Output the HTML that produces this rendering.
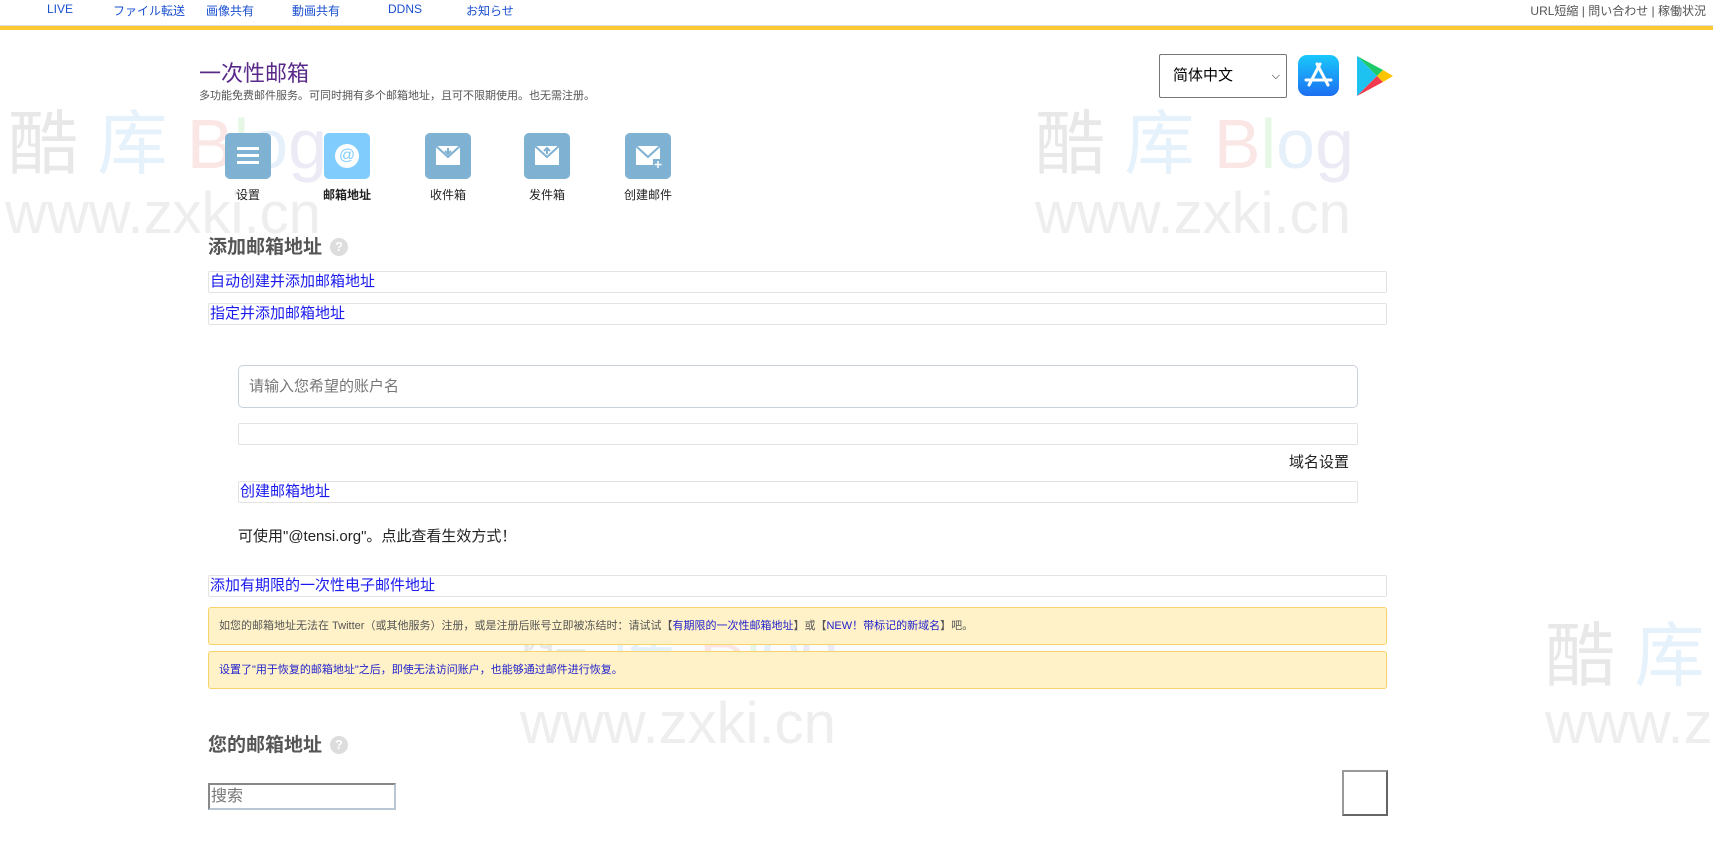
<!DOCTYPE html>
<html><head><meta charset="utf-8">
<style>
*{box-sizing:border-box;margin:0;padding:0}
body{width:1713px;height:849px;overflow:hidden;background:#fff;font-family:"Liberation Sans","Noto Sans CJK SC",sans-serif;position:relative;color:#222}
.a{position:absolute;white-space:nowrap}
.nav{font-size:12px;color:#1a4fd0;top:2px}
.bar{position:absolute;left:0;top:25px;width:1713px;height:5px;background:#fcc934;border-top:1px solid #ddd}
.wm{position:absolute;color:#eee;font-size:70px;white-space:nowrap}
.ic{position:absolute;top:133px;width:46px;height:46px;border-radius:5px;background:#7fb1d3}
.lb{position:absolute;top:186px;font-size:12px;width:100px;text-align:center;color:#222}
.h2{font-size:19px;font-weight:bold;color:#555}
.q{display:inline-block;width:18px;height:18px;border-radius:50%;background:#ddd;color:#fff;font-size:13px;text-align:center;line-height:18px;vertical-align:2px;margin-left:8px}
.box{position:absolute;border:1px solid #e3e3e3;border-radius:2px;color:#1a1aee;font-size:15px;line-height:19px;padding-left:1px}
.al{position:absolute;left:208px;width:1179px;background:#fff2c8;border:1px solid #f7d36a;border-radius:3px;font-size:11px;padding:0 10px;line-height:36px;color:#555}
.al b{font-weight:normal;color:#2222cc}
</style></head><body>
<div class="wm" style="left:8px;top:88px;color:#e8e8e8">酷 <span style="color:#e5f1fb">库</span> <span style="color:#fbe6e6">B</span><span style="color:#e6f7e6">l</span><span style="color:#e6f0fb">o</span><span style="color:#ecebf5">g</span></div>
<div class="wm" style="left:5px;top:180px;font-size:58px">www.zxki.cn</div>
<div class="wm" style="left:1035px;top:88px;color:#e8e8e8">酷 <span style="color:#e5f1fb">库</span> <span style="color:#fbe6e6">B</span><span style="color:#e6f7e6">l</span><span style="color:#e6f0fb">o</span><span style="color:#ecebf5">g</span></div>
<div class="wm" style="left:1035px;top:180px;font-size:58px">www.zxki.cn</div>
<div class="wm" style="left:520px;top:590px;color:#e8e8e8">酷 <span style="color:#e5f1fb">库</span> <span style="color:#fbe6e6">B</span><span style="color:#e6f7e6">l</span><span style="color:#e6f0fb">o</span><span style="color:#ecebf5">g</span></div>
<div class="wm" style="left:520px;top:690px;font-size:58px">www.zxki.cn</div>
<div class="wm" style="left:1545px;top:600px;color:#e8e8e8">酷 <span style="color:#e5f1fb">库</span></div>
<div class="wm" style="left:1545px;top:690px;font-size:58px">www.z</div>

<div class="a nav" style="left:47px">LIVE</div>
<div class="a nav" style="left:113px">ファイル転送</div>
<div class="a nav" style="left:206px">画像共有</div>
<div class="a nav" style="left:292px">動画共有</div>
<div class="a nav" style="left:388px">DDNS</div>
<div class="a nav" style="left:466px">お知らせ</div>
<div class="a" style="right:7px;top:2px;font-size:12px;color:#555">URL短縮 | 問い合わせ | 稼働状況</div>
<div class="bar"></div>

<div class="a" style="left:199px;top:56px;font-size:22px;color:#5a2a8a">一次性邮箱</div>
<div class="a" style="left:199px;top:87px;font-size:11px;color:#555">多功能免费邮件服务。可同时拥有多个邮箱地址，且可不限期使用。也无需注册。</div>

<div class="a" style="left:1159px;top:54px;width:128px;height:44px;border:1px solid #777;border-radius:2px;font-size:15px;line-height:42px;padding-left:13px;color:#000">简体中文<span style="position:absolute;right:6px;font-size:11px">&#9013;</span></div>
<svg class="a" style="left:1298px;top:55px" width="41" height="41" viewBox="0 0 41 41"><defs><linearGradient id="g" x1="0" y1="0" x2="0" y2="1"><stop offset="0" stop-color="#1ac8fb"/><stop offset="1" stop-color="#1d6ff2"/></linearGradient></defs><rect width="41" height="41" rx="9" fill="url(#g)"/><g stroke="#fff" stroke-width="3" stroke-linecap="round"><path d="M22 9L11 30M19 9L30 30M8 25H33"/></g></svg>
<svg class="a" style="left:1355px;top:55px" width="40" height="42" viewBox="0 0 40 42"><path d="M2 1L22 21L2 41Z" fill="#1ec2f0"/><path d="M2 1L28 15L22 21Z" fill="#1ec96a"/><path d="M2 41L28 27L22 21Z" fill="#f23a4e"/><path d="M28 15L38 21L28 27L22 21Z" fill="#ffc400"/></svg>

<div class="ic" style="left:225px"><div style="position:absolute;left:12px;top:14px;width:22px;height:3px;background:#fff;box-shadow:0 7px 0 #fff,0 14px 0 #fff"></div></div>
<div class="ic" style="left:324px;background:#80ccfd"><div style="position:absolute;left:11px;top:11px;width:24px;height:24px;border-radius:50%;background:#fff;color:#80ccfd;text-align:center;font-size:16px;line-height:24px">@</div></div>
<div class="ic" style="left:425px"><svg width="46" height="46"><rect x="11" y="13" width="24" height="19" fill="#fff"/><path d="M11 13L23 24L35 13" fill="none" stroke="#7fb1d3" stroke-width="2"/><path d="M23 15v5M20 18l3 3 3-3" stroke="#7fb1d3" stroke-width="2" fill="none"/></svg></div>
<div class="ic" style="left:524px"><svg width="46" height="46"><rect x="11" y="13" width="24" height="19" fill="#fff"/><path d="M11 13L23 24L35 13" fill="none" stroke="#7fb1d3" stroke-width="2"/><path d="M23 21v-5M20 18l3-3 3 3" stroke="#7fb1d3" stroke-width="2" fill="none"/></svg></div>
<div class="ic" style="left:625px"><svg width="46" height="46"><rect x="11" y="13" width="24" height="19" fill="#fff"/><path d="M11 13L23 24L35 13" fill="none" stroke="#7fb1d3" stroke-width="2"/><rect x="28" y="26" width="10" height="10" fill="#7fb1d3"/><path d="M33 28v7M29.5 31.5h7" stroke="#fff" stroke-width="1.5"/></svg></div>
<div class="lb" style="left:198px">设置</div>
<div class="lb" style="left:297px;font-weight:bold">邮箱地址</div>
<div class="lb" style="left:398px">收件箱</div>
<div class="lb" style="left:497px">发件箱</div>
<div class="lb" style="left:598px">创建邮件</div>

<div class="a h2" style="left:208px;top:232px">添加邮箱地址<span class="q">?</span></div>
<div class="box" style="left:208px;top:271px;width:1179px;height:22px">自动创建并添加邮箱地址</div>
<div class="box" style="left:208px;top:303px;width:1179px;height:22px">指定并添加邮箱地址</div>
<div class="a" style="left:238px;top:365px;width:1120px;height:43px;border:1px solid #c9d2dc;border-radius:5px;font-size:15px;color:#777;line-height:41px;padding-left:10px">请输入您希望的账户名</div>
<div class="box" style="left:238px;top:423px;width:1120px;height:22px"></div>
<div class="a" style="left:1289px;top:451px;font-size:15px;color:#222">域名设置</div>
<div class="box" style="left:238px;top:481px;width:1120px;height:22px">创建邮箱地址</div>
<div class="a" style="left:238px;top:525px;font-size:15px;color:#222">可使用"@tensi.org"。点此查看生效方式！</div>
<div class="box" style="left:208px;top:575px;width:1179px;height:22px">添加有期限的一次性电子邮件地址</div>
<div class="al" style="top:607px;height:38px">如您的邮箱地址无法在 Twitter（或其他服务）注册，或是注册后账号立即被冻结时：请试试【<b>有期限的一次性邮箱地址</b>】或【<b>NEW！带标记的新域名</b>】吧。</div>
<div class="al" style="top:651px;height:38px;color:#2222cc">设置了"用于恢复的邮箱地址"之后，即使无法访问账户，也能够通过邮件进行恢复。</div>

<div class="a h2" style="left:208px;top:730px">您的邮箱地址<span class="q">?</span></div>
<div class="a" style="left:208px;top:783px;width:188px;height:27px;border:2px solid #b9c6d4;border-top-color:#888;border-left-color:#888;font-size:16px;color:#777;line-height:23px;padding-left:1px">搜索</div>
<div class="a" style="left:1342px;top:770px;width:46px;height:46px;border:2px solid #999;border-right-color:#666;border-bottom-color:#666"></div>
</body></html>
